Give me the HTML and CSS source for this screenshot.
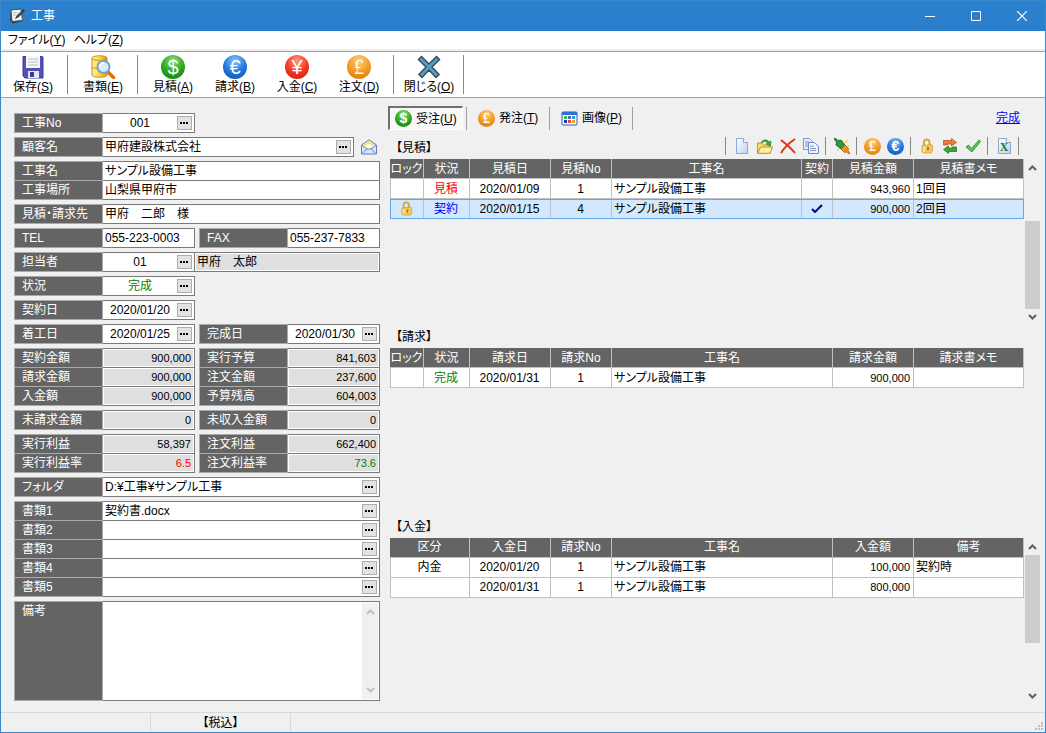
FILE: index.html
```html
<!DOCTYPE html>
<html lang="ja">
<head>
  <meta charset="UTF-8">
  <meta name="viewport" content="width=device-width, initial-scale=1.0">
  <title>工事</title>
  <link rel="stylesheet" href="styles.css">
</head>
<body>
  <!-- shared icons -->
  <svg class="sprite" width="0" height="0" aria-hidden="true">
    <defs>
      <linearGradient id="g-gold" x1="0" x2="1"><stop offset="0" stop-color="#fff0a0"/><stop offset=".5" stop-color="#fbd848"/><stop offset="1" stop-color="#d89a10"/></linearGradient>
      <linearGradient id="g-page" x1="0" x2="1" y2="1"><stop offset="0" stop-color="#fff"/><stop offset="1" stop-color="#bcd2f2"/></linearGradient>
    </defs>
    <symbol id="i-lock" viewBox="0 0 16 16">
      <path d="M5 8V4.500a2.500 2.500 0 0 1 5.500-.5V8" fill="none" stroke="#d4a840" stroke-width="2"/>
      <path d="M3 7.500l9-1 1.500 1v6l-1.500 1.500H5L3 14z" fill="#f0c95c" stroke="#c89838" stroke-width=".7"/>
      <path d="M4 8.500h2v5H4z" fill="#fbe8a0"/>
      <path d="M8 9h2l-.4 3.500H8.400z" fill="#9a7420"/>
    </symbol>
    <symbol id="i-up" viewBox="0 0 9 6"><path d="M1 5l3.500-3.500L8 5" fill="none" stroke="currentColor" stroke-width="2"/></symbol>
    <symbol id="i-down" viewBox="0 0 9 6"><path d="M1 1l3.500 3.500L8 1" fill="none" stroke="currentColor" stroke-width="2"/></symbol>
    <symbol id="i-dots" viewBox="0 0 9 2"><path d="M0 0h2v2H0zM3 0h2v2H3zM6 0h2v2H6z" fill="#000"/></symbol>
  </svg>

  <header class="titlebar">
    <svg class="app-icon" width="16" height="16" viewBox="0 0 16 16">
      <path d="M2 2.500L12 1l1.500 12L4 15.500 1 13z" fill="#2c3640"/>
      <path d="M2 2l10-1 1.500 11.500L3 13.500z" fill="#f4f4f0" stroke="#45505a"/>
      <path d="M4 5l4-.4M4.300 7.500l2-.2" stroke="#b0b4b8"/>
      <path d="M14.500 1.500l1 1.500-6 6-3 1.500 1.500-3z" fill="#455058" stroke="#1c242c" stroke-width=".6"/>
    </svg>
    <h1>工事</h1>
    <button type="button" class="win-btn" aria-label="最小化"><svg width="10" height="10"><path d="M0 5.500h10" stroke="#fff"/></svg></button>
    <button type="button" class="win-btn" aria-label="最大化"><svg width="10" height="10"><path d="M.5.5h9v9h-9z" fill="none" stroke="#fff"/></svg></button>
    <button type="button" class="win-btn" aria-label="閉じる"><svg width="10" height="10"><path d="M0 0l10 10M10 0L0 10" stroke="#fff" stroke-width="1.200"/></svg></button>
  </header>

  <nav class="menubar">
    <button type="button">ファイル(<u>Y</u>)</button>
    <button type="button">ヘルプ(<u>Z</u>)</button>
  </nav>

  <div class="toolbar">
    <button type="button" class="tool">
      <svg width="24" height="24" viewBox="0 0 24 24">
        <path d="M2 1.500h19a1 1 0 0 1 1 1V23H4l-2-2z" fill="#5350b8" stroke="#3c3a94"/>
        <path d="M5 1h14v12H5z" fill="#f6f7fb"/>
        <path d="M7 4h10M7 7h10M7 10h10" stroke="#b8bcc8"/>
        <path d="M7 16h11v7H7z" fill="#e4e6f2"/>
        <path d="M9 17h4v5H9z" fill="#3c3a94"/>
      </svg>
      <span>保存(<u>S</u>)</span>
    </button>
    <span class="sep"></span>
    <button type="button" class="tool">
      <svg width="24" height="24" viewBox="0 0 24 24">
        <path d="M1 3c0-3 15-3 15 0v17c0 3-15 3-15 0z" fill="url(#g-gold)" stroke="#c89018"/>
        <path d="M1 3.500c0 2.500 15 2.500 15 0M1 12c0 2 15 2 15 0" fill="none" stroke="#c89018"/>
        <path d="M17 17l6 6" stroke="#e07018" stroke-width="3.500" stroke-linecap="round"/>
        <circle cx="12.500" cy="12" r="6" fill="#d8ecfc" stroke="#7ca0cc" stroke-width="2"/>
        <path d="M9 11a4 4 0 0 1 4-3" fill="none" stroke="#fff" stroke-width="2"/>
      </svg>
      <span>書類(<u>E</u>)</span>
    </button>
    <span class="sep"></span>
    <button type="button" class="tool"><span class="coin dollar">$</span><span>見積(<u>A</u>)</span></button>
    <button type="button" class="tool"><span class="coin euro">€</span><span>請求(<u>B</u>)</span></button>
    <button type="button" class="tool"><span class="coin yen">¥</span><span>入金(<u>C</u>)</span></button>
    <button type="button" class="tool"><span class="coin pound">£</span><span>注文(<u>D</u>)</span></button>
    <span class="sep"></span>
    <button type="button" class="tool">
      <svg width="24" height="24" viewBox="0 0 24 24">
        <path d="M4.500 1.500L12 9l7.500-7.500 3 3L15 12l7 7.500-3 3L12 15l-7 7.500-3-3L9 12 1.500 4.500z" fill="#5c9cc0" stroke="#344e60" stroke-width="1.500"/>
      </svg>
      <span>閉じる(<u>O</u>)</span>
    </button>
    <span class="sep"></span>
  </div>

  <main class="content">
    <form class="form">
      <div class="group half">
        <div class="field"><label for="koji-no">工事No</label><div class="box"><input class="center" id="koji-no" value="001"><button type="button" class="pick" aria-label="選択"><svg width="9" height="2"><use href="#i-dots"/></svg></button></div></div>
      </div>
      <div class="customer">
        <div class="field"><label for="customer">顧客名</label><div class="box"><input id="customer" value="甲府建設株式会社"><button type="button" class="pick" aria-label="選択"><svg width="9" height="2"><use href="#i-dots"/></svg></button></div></div>
        <button type="button" class="icon-btn" aria-label="メール">
          <svg width="16" height="16" viewBox="0 0 16 16">
            <path d="M.5 6L8 .8 15.500 6v9H.5z" fill="#d4e6fa" stroke="#6878b8"/>
            <path d="M3 5l5-3.500L13 5v3l-5 2-5-2z" fill="#fbe27a"/>
            <path d="M4 7l4-2 4 2-4 3z" fill="#fff"/>
            <path d="M1 6.500L6 10h4l5-3.500M1 14.500L6 10M15 14.500L10 10" fill="none" stroke="#6c8cd0"/>
          </svg>
        </button>
      </div>
      <div class="group">
        <div class="field"><label for="koji-name">工事名</label><div class="box"><input id="koji-name" value="サンプル設備工事"></div></div>
        <div class="field"><label for="koji-place">工事場所</label><div class="box"><input id="koji-place" value="山梨県甲府市"></div></div>
      </div>
      <div class="group">
        <div class="field"><label for="bill-to">見積・請求先</label><div class="box"><input id="bill-to" value="甲府　二郎　様"></div></div>
      </div>
      <div class="pair">
        <div class="field"><label for="tel">TEL</label><div class="box"><input id="tel" value="055-223-0003"></div></div>
        <div class="field"><label for="fax">FAX</label><div class="box"><input id="fax" value="055-237-7833"></div></div>
      </div>
      <div class="staff">
        <div class="field"><label for="staff">担当者</label><div class="box"><input class="center" id="staff" value="01"><button type="button" class="pick" aria-label="選択"><svg width="9" height="2"><use href="#i-dots"/></svg></button></div></div>
        <div class="box readonly"><input value="甲府　太郎" aria-label="担当者名" readonly></div>
      </div>
      <div class="group half">
        <div class="field"><label for="status">状況</label><div class="box"><input class="center green" id="status" value="完成"><button type="button" class="pick" aria-label="選択"><svg width="9" height="2"><use href="#i-dots"/></svg></button></div></div>
      </div>
      <div class="group half">
        <div class="field"><label for="contract-date">契約日</label><div class="box"><input class="center" id="contract-date" value="2020/01/20"><button type="button" class="pick" aria-label="選択"><svg width="9" height="2"><use href="#i-dots"/></svg></button></div></div>
      </div>
      <div class="pair">
        <div class="field"><label for="start-date">着工日</label><div class="box"><input class="center" id="start-date" value="2020/01/25"><button type="button" class="pick" aria-label="選択"><svg width="9" height="2"><use href="#i-dots"/></svg></button></div></div>
        <div class="field"><label for="end-date">完成日</label><div class="box"><input class="center" id="end-date" value="2020/01/30"><button type="button" class="pick" aria-label="選択"><svg width="9" height="2"><use href="#i-dots"/></svg></button></div></div>
      </div>
      <div class="pair">
        <div class="group">
          <div class="field"><label for="a1">契約金額</label><div class="box readonly"><input class="num" id="a1" value="900,000" readonly></div></div>
          <div class="field"><label for="a2">請求金額</label><div class="box readonly"><input class="num" id="a2" value="900,000" readonly></div></div>
          <div class="field"><label for="a3">入金額</label><div class="box readonly"><input class="num" id="a3" value="900,000" readonly></div></div>
        </div>
        <div class="group">
          <div class="field"><label for="b1">実行予算</label><div class="box readonly"><input class="num" id="b1" value="841,603" readonly></div></div>
          <div class="field"><label for="b2">注文金額</label><div class="box readonly"><input class="num" id="b2" value="237,600" readonly></div></div>
          <div class="field"><label for="b3">予算残高</label><div class="box readonly"><input class="num" id="b3" value="604,003" readonly></div></div>
        </div>
      </div>
      <div class="pair">
        <div class="field"><label for="a4">未請求金額</label><div class="box readonly"><input class="num" id="a4" value="0" readonly></div></div>
        <div class="field"><label for="b4">未収入金額</label><div class="box readonly"><input class="num" id="b4" value="0" readonly></div></div>
      </div>
      <div class="pair">
        <div class="group">
          <div class="field"><label for="a5">実行利益</label><div class="box readonly"><input class="num" id="a5" value="58,397" readonly></div></div>
          <div class="field"><label for="a6">実行利益率</label><div class="box readonly"><input class="num red" id="a6" value="6.5" readonly></div></div>
        </div>
        <div class="group">
          <div class="field"><label for="b5">注文利益</label><div class="box readonly"><input class="num" id="b5" value="662,400" readonly></div></div>
          <div class="field"><label for="b6">注文利益率</label><div class="box readonly"><input class="num green" id="b6" value="73.6" readonly></div></div>
        </div>
      </div>
      <div class="group">
        <div class="field"><label for="folder">フォルダ</label><div class="box"><input id="folder" value="D:¥工事¥サンプル工事"><button type="button" class="pick" aria-label="選択"><svg width="9" height="2"><use href="#i-dots"/></svg></button></div></div>
      </div>
      <div class="group">
        <div class="field"><label for="doc1">書類1</label><div class="box"><input id="doc1" value="契約書.docx"><button type="button" class="pick" aria-label="選択"><svg width="9" height="2"><use href="#i-dots"/></svg></button></div></div>
        <div class="field"><label for="doc2">書類2</label><div class="box"><input id="doc2"><button type="button" class="pick" aria-label="選択"><svg width="9" height="2"><use href="#i-dots"/></svg></button></div></div>
        <div class="field"><label for="doc3">書類3</label><div class="box"><input id="doc3"><button type="button" class="pick" aria-label="選択"><svg width="9" height="2"><use href="#i-dots"/></svg></button></div></div>
        <div class="field"><label for="doc4">書類4</label><div class="box"><input id="doc4"><button type="button" class="pick" aria-label="選択"><svg width="9" height="2"><use href="#i-dots"/></svg></button></div></div>
        <div class="field"><label for="doc5">書類5</label><div class="box"><input id="doc5"><button type="button" class="pick" aria-label="選択"><svg width="9" height="2"><use href="#i-dots"/></svg></button></div></div>
      </div>
      <div class="field memo">
        <label for="memo">備考</label>
        <div class="box">
          <textarea id="memo" rows="5"></textarea>
          <div class="scroll disabled"><svg width="9" height="6"><use href="#i-up"/></svg><svg width="9" height="6"><use href="#i-down"/></svg></div>
        </div>
      </div>
    </form>

    <div class="lists">
      <div class="tabs">
        <button type="button" class="tab active"><span class="coin small dollar">$</span>受注(<u>U</u>)</button>
        <span class="sep"></span>
        <button type="button" class="tab"><span class="coin small pound">£</span>発注(<u>T</u>)</button>
        <span class="sep"></span>
        <button type="button" class="tab">
          <svg width="17" height="17" viewBox="0 0 17 17">
            <rect x="1" y="2" width="15" height="13" rx="1" fill="#fff" stroke="#2860b8"/>
            <path d="M1 2h15v3H1z" fill="#2c70d0"/>
            <path d="M3 6h3v3H3z" fill="#50b848"/><path d="M7 6h3v3H7z" fill="#4868d8"/><path d="M11 6h3v3h-3z" fill="#28a0c8"/>
            <path d="M3 10h3v3H3z" fill="#203c98"/><path d="M7 10h3v3H7z" fill="#e84830"/><path d="M11 10h3v3h-3z" fill="#f0a028"/>
          </svg>画像(<u>P</u>)
        </button>
        <span class="sep"></span>
        <a class="state-link" href="#status">完成</a>
      </div>

      <section class="list">
        <div class="list-head">
          <h2>【見積】</h2>
          <div class="actions">
            <span class="sep"></span>
            <button type="button" aria-label="新規">
              <svg width="16" height="16" viewBox="0 0 16 16"><path d="M2.500.5h7l4 4v11h-11z" fill="url(#g-page)" stroke="#8ca8d8"/><path d="M9.500.5v4h4" fill="#fff" stroke="#8ca8d8"/></svg>
            </button>
            <button type="button" aria-label="開く">
              <svg width="16" height="16" viewBox="0 0 16 16"><path d="M.5 15V5h5l1 2h7v8z" fill="#f8dc70" stroke="#c89420"/><path d="M.8 15.300L3.500 9h12l-2.500 6.300z" fill="#fdeea0" stroke="#c89420"/><path d="M4 5c2-4 6-4 8-1l2-1-.5 5L9 6l1.500-1C9 3 7 3 4 5z" fill="#3cb030" stroke="#187818" stroke-width=".6"/></svg>
            </button>
            <button type="button" aria-label="削除">
              <svg width="16" height="16" viewBox="0 0 16 16"><path d="M1 2c5 4 10 8 14 13M15 1C9 5 4 10 1 15" fill="none" stroke="#e83010" stroke-width="2"/></svg>
            </button>
            <button type="button" aria-label="コピー">
              <svg width="16" height="16" viewBox="0 0 16 16"><path d="M.5.5h6l3 3v8h-9z" fill="#e4eefc" stroke="#8098cc"/><path d="M2 4h4M2 6h4M2 8h3" stroke="#8098cc"/><path d="M5.500 4.500h6l4 4v7h-10z" fill="#eef4fd" stroke="#7088c4"/><path d="M7 8h4M7 10.500h6M7 12.500h6" stroke="#8098cc"/></svg>
            </button>
            <span class="sep"></span>
            <button type="button" aria-label="接続">
              <svg width="16" height="16" viewBox="0 0 16 16"><path d="M11 5l3-3M5 11l-2 2M13 8h2" stroke="#f8d830" stroke-width="1.500"/><path d="M0 1l1-1 3 2.500 3-.5 4 5-4 4-5-4 .5-3z" fill="#2c9a38" stroke="#145c1c" stroke-width=".8"/><path d="M7 11l4-4 3.500 3.500-.5 2L16 15l-1 1-2.500-2-2 .5z" fill="#f09028" stroke="#b05808" stroke-width=".8"/></svg>
            </button>
            <span class="sep"></span>
            <button type="button" aria-label="注文"><span class="coin small pound">£</span></button>
            <button type="button" aria-label="請求"><span class="coin small euro">€</span></button>
            <span class="sep"></span>
            <button type="button" aria-label="ロック"><svg width="16" height="16"><use href="#i-lock"/></svg></button>
            <button type="button" aria-label="入替">
              <svg width="16" height="16" viewBox="0 0 16 16"><path d="M1.500 7V2.500h8V.5l5 4-5 3.500V6h-4v1z" fill="#f07838" stroke="#b84818" stroke-width=".7"/><path d="M14.500 9v4.500h-8v2l-5-4L6.500 8v2h4V9z" fill="#38a838" stroke="#186818" stroke-width=".7"/></svg>
            </button>
            <button type="button" aria-label="確定">
              <svg width="16" height="16" viewBox="0 0 16 16"><path d="M1 9l2.500-2 3 3.500L14 2l1.500 1.500L7 14z" fill="#58c850" stroke="#208828" stroke-width=".8"/></svg>
            </button>
            <span class="sep"></span>
            <button type="button" aria-label="Excel出力">
              <svg width="16" height="16" viewBox="0 0 16 16"><path d="M2.500.5h8l4 4v11h-12z" fill="url(#g-page)" stroke="#8ca8c8"/><path d="M10.500.5v4h4" fill="#fff" stroke="#8ca8c8"/><text class="excel-sign" x="8" y="13">X</text></svg>
            </button>
            <span class="sep"></span>
          </div>
        </div>
        <div class="list-body">
          <div class="table-wrap">
            <table>
              <colgroup><col class="c-lock"><col class="c-state"><col class="c-date"><col class="c-no"><col><col class="c-check"><col class="c-amount"><col class="c-memo"></colgroup>
              <thead>
                <tr><th>ロック</th><th>状況</th><th>見積日</th><th>見積No</th><th>工事名</th><th>契約</th><th>見積金額</th><th>見積書メモ</th></tr>
              </thead>
              <tbody>
                <tr><td></td><td class="center red">見積</td><td class="center">2020/01/09</td><td class="center">1</td><td>サンプル設備工事</td><td></td><td class="num">943,960</td><td>1回目</td></tr>
                <tr class="selected"><td class="center"><svg width="15" height="15"><use href="#i-lock"/></svg></td><td class="center blue">契約</td><td class="center">2020/01/15</td><td class="center">4</td><td>サンプル設備工事</td><td class="center"><svg width="12" height="9" viewBox="0 0 12 9"><path d="M1 5l3 3 7-7" fill="none" stroke="#000080" stroke-width="2"/></svg></td><td class="num">900,000</td><td>2回目</td></tr>
              </tbody>
            </table>
          </div>
          <div class="scroll"><svg width="9" height="6"><use href="#i-up"/></svg><div class="track"><div class="thumb lower"></div></div><svg width="9" height="6"><use href="#i-down"/></svg></div>
        </div>
      </section>

      <section class="list">
        <div class="list-head"><h2>【請求】</h2></div>
        <div class="list-body">
          <div class="table-wrap">
            <table>
              <colgroup><col class="c-lock"><col class="c-state"><col class="c-date"><col class="c-no"><col><col class="c-amount"><col class="c-memo"></colgroup>
              <thead>
                <tr><th>ロック</th><th>状況</th><th>請求日</th><th>請求No</th><th>工事名</th><th>請求金額</th><th>請求書メモ</th></tr>
              </thead>
              <tbody>
                <tr><td></td><td class="center green">完成</td><td class="center">2020/01/31</td><td class="center">1</td><td>サンプル設備工事</td><td class="num">900,000</td><td></td></tr>
              </tbody>
            </table>
          </div>
          <div class="scroll-space"></div>
        </div>
      </section>

      <section class="list">
        <div class="list-head"><h2>【入金】</h2></div>
        <div class="list-body">
          <div class="table-wrap">
            <table>
              <colgroup><col class="c-kind"><col class="c-date"><col class="c-no"><col><col class="c-amount"><col class="c-memo"></colgroup>
              <thead>
                <tr><th>区分</th><th>入金日</th><th>請求No</th><th>工事名</th><th>入金額</th><th>備考</th></tr>
              </thead>
              <tbody>
                <tr><td class="center">内金</td><td class="center">2020/01/20</td><td class="center">1</td><td>サンプル設備工事</td><td class="num">100,000</td><td>契約時</td></tr>
                <tr><td></td><td class="center">2020/01/31</td><td class="center">1</td><td>サンプル設備工事</td><td class="num">800,000</td><td></td></tr>
              </tbody>
            </table>
          </div>
          <div class="scroll"><svg width="9" height="6"><use href="#i-up"/></svg><div class="track"><div class="thumb"></div></div><svg width="9" height="6"><use href="#i-down"/></svg></div>
        </div>
      </section>
    </div>
  </main>

  <footer class="statusbar">
    <span></span>
    <span>【税込】</span>
    <svg width="9" height="9" viewBox="0 0 9 9"><path d="M6 0h2v2H6zM3 3h2v2H3zM6 3h2v2H6zM0 6h2v2H0zM3 6h2v2H3zM6 6h2v2H6z" fill="#bfbfbf"/></svg>
  </footer>
</body>
</html>
```
FILE: styles.css
```css
* {
  box-sizing: border-box;
}

body {
  display: flex;
  flex-direction: column;
  min-height: 100vh;
  margin: 0;
  border: 1px solid #3a88cc;
  background-color: #f0f0f0;
  color: #000;
  font-family: "Liberation Sans", "Noto Sans CJK JP", sans-serif;
  font-size: 12px;
  line-height: 16px;
  font-feature-settings: "palt";
}

button, input, textarea {
  margin: 0;
  padding: 0;
  border: 0;
  background: none;
  color: inherit;
  font: inherit;
  font-feature-settings: inherit;
}

svg {
  display: block;
  flex: none;
}

h1, h2 {
  margin: 0;
  font-size: 12px;
  font-weight: normal;
}

.sprite {
  position: absolute;
}

/* round currency icons */
.coin {
  flex: none;
  width: 24px;
  height: 24px;
  border-radius: 50%;
  color: #fff;
  font-size: 20px;
  line-height: 24px;
  text-align: center;
}

.coin.small {
  width: 17px;
  height: 17px;
  font-size: 14px;
  font-weight: bold;
  line-height: 17px;
}

.dollar {
  background: radial-gradient(circle at 50% 25%, #8fe07a, #2ea820 50%, #0c7a08);
}

.euro {
  background: radial-gradient(circle at 50% 25%, #8cc4f8, #2478dc 50%, #0c4cb0);
}

.yen {
  background: radial-gradient(circle at 50% 25%, #ff9a80, #f43a20 50%, #d01808);
}

.pound {
  background: radial-gradient(circle at 50% 25%, #ffd080, #f49a20 50%, #d87408);
  font-family: "Liberation Serif", serif;
}

.excel-sign {
  fill: #187838;
  font: bold 12px "Liberation Serif", serif;
  text-anchor: middle;
}

.red { color: #f00; }
.blue { color: #00f; }
.green { color: #008000; }

/* title bar and menu */
.titlebar {
  display: flex;
  align-items: center;
  height: 30px;
  padding-left: 8px;
  background-color: #2a80cd;
  color: #fff;
}

.titlebar h1 {
  flex: 1;
  padding-left: 6px;
}

.win-btn {
  display: flex;
  align-items: center;
  justify-content: center;
  width: 46px;
  height: 30px;
}

.menubar {
  display: flex;
  gap: 8px;
  height: 20px;
  padding: 0 7px;
  border-bottom: 2px solid #f0f0f0;
  background-color: #fff;
}

/* main toolbar */
.toolbar {
  display: flex;
  height: 47px;
  padding: 0 1px;
  border-top: 1px solid #a0a0a0;
  border-bottom: 1px solid #a0a0a0;
  background-color: #fff;
}

.tool {
  display: flex;
  flex-direction: column;
  align-items: center;
  justify-content: flex-end;
  width: 62px;
  padding-bottom: 2px;
  white-space: nowrap;
}

.sep {
  width: 8px;
  padding: 3px 0;
}

.sep::before {
  content: "";
  display: block;
  width: 1px;
  height: 100%;
  margin-left: 3px;
  background-color: #888;
}

.content {
  display: flex;
  flex: 1;
  gap: 8px;
  padding: 8px 5px 7px 13px;
}

/* left form */
.form {
  display: flex;
  flex: 0 0 366px;
  flex-direction: column;
  gap: 4px;
  padding-top: 7px;
}

.pair {
  display: grid;
  grid-template-columns: 1fr 1fr;
  gap: 4px;
}

.half {
  width: 181px;
}

.field {
  display: flex;
  min-height: 20px;
}

.group .field + .field {
  margin-top: -1px;
}

.field label {
  width: 89px;
  padding: 1px 0 0 7px;
  border: 1px solid #aaa;
  background-color: #646464;
  color: #fff;
  white-space: nowrap;
}

.box {
  display: flex;
  flex: 1;
  align-items: center;
  min-width: 0;
  height: 20px;
  padding-right: 2px;
  border: 1px solid #7a7a7a;
  border-left: 0;
  background-color: #fff;
}

.box input {
  flex: 1;
  width: 0;
  height: 16px;
  padding-left: 2px;
}

.box.readonly {
  padding-right: 0;
  background-color: #dfdfdf;
  box-shadow: inset 0 0 0 1px #fff;
}

.box input.center {
  padding-left: 0;
}

.center {
  text-align: center;
}

.box input.num {
  padding-right: 3px;
}

.num {
  font-size: 11px;
  text-align: right;
}

.pick {
  display: flex;
  align-items: center;
  justify-content: center;
  width: 15px;
  height: 14px;
  border: 1px solid #adadad;
  background-color: #e3e3e3;
}

.customer {
  display: flex;
  align-items: center;
  gap: 7px;
}

.customer .field {
  flex: 1;
}

.icon-btn {
  padding-right: 3px;
}

.staff {
  display: flex;
}

.staff .field {
  width: 181px;
}

.memo .box {
  align-items: stretch;
  height: 100px;
  padding: 1px;
}

.memo textarea {
  flex: 1;
  width: 0;
  resize: none;
}

/* right side */
.lists {
  display: flex;
  flex: 1;
  flex-direction: column;
  min-width: 0;
}

.tabs {
  display: flex;
  align-items: stretch;
  height: 24px;
}

.tabs .sep {
  padding: 1px 0 0;
}

.tabs .sep::before {
  background-color: #a0a0a0;
}

.tab {
  display: flex;
  align-items: center;
  width: 75px;
  padding-left: 7px;
  white-space: nowrap;
}

.tab svg, .tab .coin {
  margin-right: 4px;
}

.tab.active {
  padding-left: 5px;
  border: 1px solid #fff;
  border-top: 2px solid #707070;
  border-left: 2px solid #707070;
  background-color: #f8f8f8;
}

.state-link {
  margin: 4px 20px 0 auto;
  color: #00f;
}

.list {
  flex: 1;
  display: flex;
  flex-direction: column;
  padding-left: 2px;
}

.tabs + .list {
  margin-top: 7px;
}

.list-head {
  display: flex;
  align-items: flex-start;
  justify-content: space-between;
  height: 22px;
  padding-right: 17px;
}

.list-head h2 {
  padding: 3px 0 0 6px;
}

.actions {
  display: flex;
  height: 18px;
}

.actions .sep {
  padding: 0;
}

.actions button {
  display: flex;
  align-items: center;
  justify-content: center;
  width: 23px;
}

.list-body {
  display: flex;
  flex: 1;
}

.table-wrap {
  flex: 1;
}

table {
  width: 100%;
  border-spacing: 0;
  table-layout: fixed;
}

th, td {
  height: 20px;
  padding: 0 3px 0 2px;
  border-right: 1px solid #c0c0c0;
  border-bottom: 1px solid #c0c0c0;
  font-weight: normal;
  line-height: 16px;
  white-space: nowrap;
}

th {
  padding: 0;
  background-color: #646464;
  color: #fff;
}

td {
  background-color: #fff;
}

td:first-child {
  border-left: 1px solid #c0c0c0;
}

td svg {
  margin: 0 auto;
}

.selected {
  outline: 1px solid #66a7e8;
  outline-offset: -1px;
}

.selected td {
  background-color: #d1e8ff;
}

.c-lock { width: 34px; }
.c-state { width: 46px; }
.c-kind { width: 80px; }
.c-date { width: 81px; }
.c-no { width: 61px; }
.c-check { width: 31px; }
.c-amount { width: 81px; }
.c-memo { width: 110px; }

.scroll {
  display: flex;
  flex-direction: column;
  align-items: center;
  justify-content: space-between;
  width: 16px;
  padding: 6px 0;
  color: #606060;
}

.scroll.disabled {
  background-color: #f0f0f0;
  color: #bfbfbf;
}

.scroll-space {
  width: 16px;
}

.track {
  display: flex;
  flex: 1;
  flex-direction: column;
  align-self: stretch;
  margin: 5px 0;
  padding-left: 1px;
}

.thumb {
  height: 88px;
  background-color: #cdcdcd;
}

.thumb.lower {
  margin-top: auto;
}

/* status bar */
.statusbar {
  display: flex;
  height: 20px;
  border-top: 1px solid #d9d9d9;
}

.statusbar span {
  width: 140px;
  padding-top: 2px;
  border-right: 1px solid #d9d9d9;
  text-align: center;
}

.statusbar span:first-child {
  width: 150px;
}

.statusbar svg {
  align-self: flex-end;
  margin: 0 1px 1px auto;
}
```
